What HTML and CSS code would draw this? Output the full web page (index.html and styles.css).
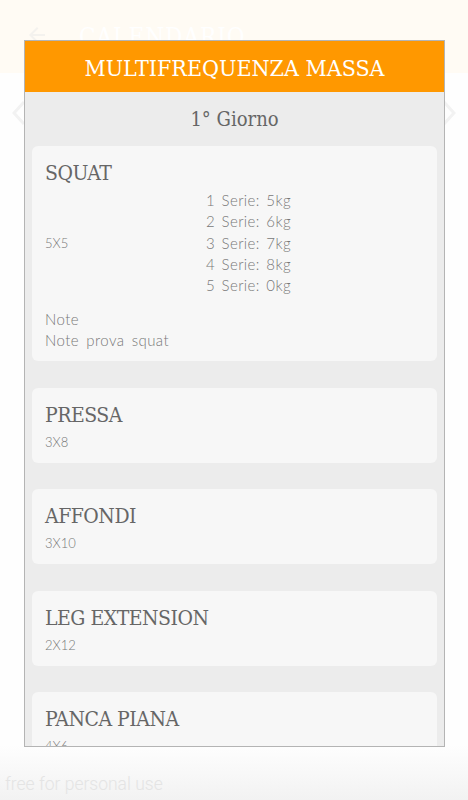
FILE: index.html
```html
<!DOCTYPE html>
<html lang="it">
<head>
<meta charset="utf-8">
<title>Calendario</title>
<link rel="stylesheet" href="styles.css">
</head>
<body>
<div class="screen">
  <header class="appbar">
    <svg class="back" viewBox="0 0 24 24"><path d="M20 11H7.83l5.59-5.59L12 4l-8 8 8 8 1.41-1.41L7.83 13H20v-2z"/></svg>
    <span class="appbar-title">CALENDARIO</span>
  </header>
  <div class="nav">
    <svg class="chev" viewBox="0 0 14 26"><path d="M12 2 L2 13 L12 24"/></svg>
    <svg class="chev" viewBox="0 0 14 26"><path d="M2 2 L12 13 L2 24"/></svg>
  </div>
  <div class="watermark">free for personal use</div>

  <div class="dialog">
    <div class="dialog-head">MULTIFREQUENZA MASSA</div>
    <div class="dialog-body">
      <div class="day">1° Giorno</div>
      <div class="cards">
        <div class="card">
          <div class="card-title">SQUAT</div>
          <div class="card-detail">
            <div class="card-scheme">5X5</div>
            <div class="series">
              <div>1 Serie: 5kg</div>
              <div>2 Serie: 6kg</div>
              <div>3 Serie: 7kg</div>
              <div>4 Serie: 8kg</div>
              <div>5 Serie: 0kg</div>
            </div>
          </div>
          <div class="note">
            <div>Note</div>
            <div>Note prova squat</div>
          </div>
        </div>
        <div class="card">
          <div class="card-title">PRESSA</div>
          <div class="card-sub">3X8</div>
        </div>
        <div class="card">
          <div class="card-title">AFFONDI</div>
          <div class="card-sub">3X10</div>
        </div>
        <div class="card">
          <div class="card-title">LEG EXTENSION</div>
          <div class="card-sub">2X12</div>
        </div>
        <div class="card">
          <div class="card-title">PANCA PIANA</div>
          <div class="card-sub">4X6</div>
        </div>
      </div>
    </div>
  </div>
</div>
</body>
</html>
```
FILE: styles.css
```css
* {
  box-sizing: border-box;
  margin: 0;
  padding: 0;
}

html,
body {
  width: 468px;
  height: 800px;
  overflow: hidden;
}

body {
  background: #fefefe;
  font-family: "Lato", "Open Sans", sans-serif;
}

.screen {
  position: relative;
  width: 468px;
  height: 800px;
  background: linear-gradient(to bottom, #fefefe 0, #fefefe 745px, #f2f2f2 800px);
}

.appbar {
  height: 73px;
  background: #fffbf4;
  display: flex;
  align-items: flex-start;
  gap: 30px;
  padding: 23px 0 0 25px;
}

.back {
  width: 24px;
  height: 24px;
  fill: #f4f2ee;
}

.appbar-title {
  font-family: "DejaVu Serif", serif;
  font-stretch: condensed;
  font-size: 24px;
  line-height: 28px;
  color: #ffffff;
  letter-spacing: 1px;
}

.nav {
  display: flex;
  justify-content: space-between;
  padding: 27px 12px 0 12px;
}

.chev {
  width: 14px;
  height: 26px;
  fill: none;
  stroke: #f2f2f2;
  stroke-width: 3;
}

.watermark {
  position: absolute;
  left: 5px;
  bottom: 6px;
  font-family: "Roboto", sans-serif;
  font-weight: 300;
  font-size: 17.5px;
  color: #e4e4e4;
}

.dialog {
  position: absolute;
  left: 24px;
  top: 40px;
  width: 421px;
  height: 707px;
  border: 1px solid #b4b4b4;
  background: #ececec;
  display: flex;
  flex-direction: column;
  overflow: hidden;
}

.dialog-head {
  flex: 0 0 51px;
  background: #ff9800;
  color: #ffffff;
  font-family: "DejaVu Serif", serif;
  font-stretch: condensed;
  font-size: 23px;
  display: flex;
  align-items: center;
  justify-content: center;
  padding-top: 2px;
}

.dialog-body {
  flex: 1;
  padding: 0 7px;
  overflow: hidden;
}

.day {
  height: 54px;
  display: flex;
  align-items: center;
  justify-content: center;
  font-family: "DejaVu Serif", serif;
  font-stretch: condensed;
  font-size: 20px;
  color: #666666;
}

.cards {
  display: flex;
  flex-direction: column;
  gap: 26.5px;
}

.card {
  background: #f7f7f7;
  border-radius: 6px;
  padding: 14px 13px 12px;
}

.card:first-child {
  padding-bottom: 10px;
}

.card-title {
  font-family: "DejaVu Serif", serif;
  font-stretch: condensed;
  font-size: 21px;
  line-height: 26px;
  letter-spacing: -0.5px;
  color: #666666;
}

.card-sub {
  margin-top: 5px;
  font-size: 13px;
  font-weight: 300;
  line-height: 18px;
  color: #777777;
}

.card-detail {
  margin-top: 4px;
  display: grid;
  grid-template-columns: 161px auto;
  align-items: center;
  font-size: 13px;
  font-weight: 300;
  color: #777777;
}

.series {
  font-size: 15px;
  line-height: 21.25px;
  letter-spacing: 0.4px;
  word-spacing: 2px;
}

.note {
  margin-top: 13px;
  font-size: 15px;
  font-weight: 300;
  line-height: 21px;
  letter-spacing: 0.4px;
  word-spacing: 3px;
  color: #777777;
}
```
